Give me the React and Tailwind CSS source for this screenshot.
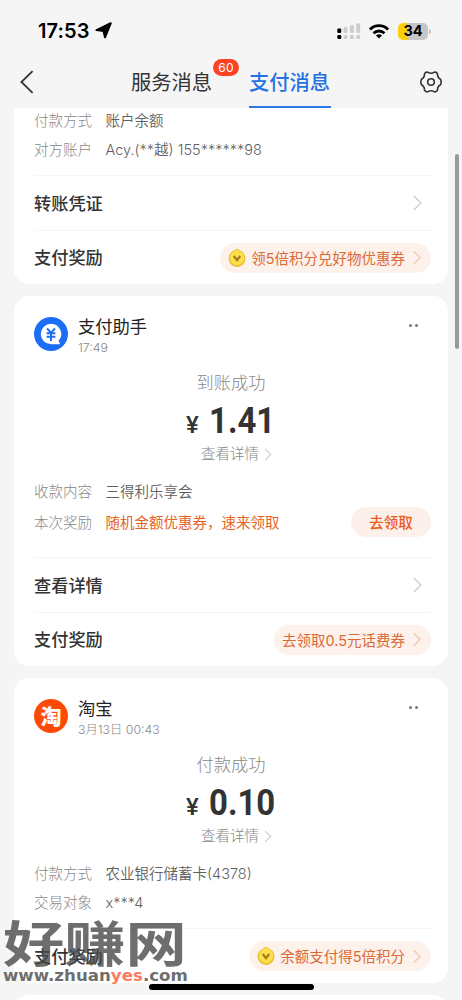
import { clsx } from 'clsx';

const ChevronRight = ({ className }) => (
  <svg viewBox="0 0 9 16" fill="none" stroke="currentColor" strokeWidth="1.3" className={className}>
    <path d="M0.8 1L8 8L0.8 15" />
  </svg>
);

const StatusBar = () => (
  <div className="h-[60px] flex items-center justify-between pl-[38px] pr-[31px] pt-[2px]">
    <div className="flex items-center gap-[5px]">
      <span className="text-[20px] leading-none font-semibold tracking-[0.1px] text-black">17:53</span>
      <svg width="17" height="17" viewBox="0 0 16 16" className="mt-[-1px]">
        <path d="M14.8 1.2L9.4 14.4L8 8.4L1.4 7.6Z" fill="#000" stroke="#000" strokeWidth="1.9" strokeLinejoin="round" />
      </svg>
    </div>
    <div className="flex items-center">
      <svg width="24" height="17" viewBox="0 0 24 17">
        <rect x="0.3" y="5.5" width="4" height="4.5" rx="1.2" fill="#000" />
        <rect x="0.3" y="12" width="4" height="4" rx="1.2" fill="#000" />
        <g fill="#cdcdcd">
          <rect x="6.6" y="4" width="3.8" height="6" rx="1.2" />
          <rect x="13" y="2" width="3.8" height="8" rx="1.2" />
          <rect x="19.3" y="0.3" width="3.8" height="9.7" rx="1.2" />
          <rect x="6.6" y="12" width="3.8" height="4" rx="1.2" />
          <rect x="13" y="12" width="3.8" height="4" rx="1.2" />
          <rect x="19.3" y="12" width="3.8" height="4" rx="1.2" />
        </g>
      </svg>
      <svg width="20" height="15" viewBox="0 0 20 15" fill="none" stroke="#000" strokeWidth="2.8" className="ml-2">
        <path d="M0.9 5.6C6 0.4 14 0.4 19.1 5.6" />
        <path d="M4.5 9.3C7.7 6.2 12.3 6.2 15.5 9.3" />
        <path d="M7 11.4C8.8 10 11.2 10 13 11.4L10 14.6Z" fill="#000" stroke="none" />
      </svg>
      <div className="ml-[9px] flex h-[17px] w-[30px] items-center justify-center rounded-[5px] bg-linear-to-r from-[#fcce0a] from-34% to-[#c6c6c6] to-34%">
        <span className="text-[14.5px] leading-none font-bold text-black">34</span>
      </div>
      <div className="ml-px h-[5px] w-[2px] rounded-r bg-[#c6c6c6]" />
    </div>
  </div>
);

const TabBar = () => (
  <div className="h-12 flex items-center pl-[20px] pr-5 text-[20.3px]">
    <svg width="14" height="24" viewBox="0 0 14 24" fill="none" stroke="#333" strokeWidth="1.8" className="mt-[-4px]">
      <path d="M12.6 1.2L1.4 12L12.6 22.8" />
    </svg>
    <div className="relative ml-[97px] h-full w-[82px] leading-[46px] whitespace-nowrap text-[#333]">
      服务消息
      <span className="absolute top-[-1px] left-[82px] h-[17px] w-[26px] rounded-full bg-[#fc4223] text-center text-[12px] leading-[17px] tracking-[0.3px] text-white">
        60
      </span>
    </div>
    <div className="ml-[36px] h-[47px] w-[82px] border-b-[2.5px] border-[#2f78e8] leading-[44px] font-medium whitespace-nowrap text-[#2672e3]">
      支付消息
    </div>
    <svg width="24" height="24" viewBox="0 0 24 24" fill="none" stroke="#333" strokeWidth="1.6" strokeLinejoin="round" className="ml-auto mt-[-4px] mr-[-1px]">
      <path d="M8.6 2.2Q12 4.4 15.4 2.2Q17.6 1.9 18.5 3.8Q18.3 7.6 21.6 9.3Q23 12 21.6 14.7Q18.3 16.4 18.5 20.2Q17.6 22.1 15.4 21.8Q12 19.6 8.6 21.8Q6.4 22.1 5.5 20.2Q5.7 16.4 2.4 14.7Q1 12 2.4 9.3Q5.7 7.6 5.5 3.8Q6.4 1.9 8.6 2.2Z" />
      <circle cx="12" cy="12" r="3.3" />
    </svg>
  </div>
);

const PayAssistantLogo = () => (
  <svg width="34" height="34" viewBox="0 0 34 34">
    <circle cx="17" cy="17" r="17" fill="#1b6df5" />
    <path d="M17 6.8A10.2 10.2 0 1 0 17 27.2H25.2Q26.4 27 25.6 25.8L24.6 23.8A10.2 10.2 0 0 0 17 6.8Z" fill="#fff" />
    <path d="M13 11.5L17 15.6L21 11.5M12.6 16.2H21.4M12.6 19.8H21.4M17 15.6V24" fill="none" stroke="#1b6df5" strokeWidth="2" />
  </svg>
);

const TaobaoLogo = () => (
  <div className="flex size-[34px] items-center justify-center rounded-full bg-[#fd4a05]">
    <span className="text-[21px] leading-none font-black text-white">淘</span>
  </div>
);

const Coin = () => (
  <svg width="18" height="20" viewBox="0 0 18 20" className="mr-[5px]">
    <path d="M9 0.8Q10.2 0.8 11.5 2.3Q17.4 4.8 17.4 10.6A8.4 8.4 0 0 1 0.6 10.6Q0.6 4.8 6.5 2.3Q7.8 0.8 9 0.8Z" fill="#e9bd2c" />
    <path d="M9 1.4Q10 1.4 11.2 3Q16.2 5 16.2 10A7.2 7.2 0 0 1 1.8 10Q1.8 5 6.8 3Q8 1.4 9 1.4Z" fill="#fbe04b" />
    <path d="M5.8 8L9 12.2L12.2 8" fill="none" stroke="#a77b1c" strokeWidth="2.2" />
  </svg>
);

const Detail = ({ label, value, first }) => (
  <div className={clsx('flex h-5 items-center pt-[2px] text-[14.5px]', !first && 'mt-[9px]')}>
    <span className="w-[71.5px] font-light text-[#888]">{label}</span>
    <span className="font-[350] text-[#606060]">{value}</span>
  </div>
);

const LinkRow = ({ title }) => (
  <div className="flex h-[54.5px] items-center justify-between border-t border-[#f5f5f5] pr-[9px]">
    <span className="pt-[2px] text-[17.2px] font-medium text-[#333]">{title}</span>
    <ChevronRight className="h-4 w-[9px] text-[#ccc]" />
  </div>
);

const RewardRow = ({ text, coin }) => (
  <div className="flex h-[54.5px] items-center justify-between border-t border-[#f5f5f5]">
    <span className="pt-[2px] text-[17.2px] font-medium text-[#333]">支付奖励</span>
    <div className="mt-px flex h-[30px] items-center rounded-full bg-[#fdf1ec] pr-[10px] pl-2 text-[14.5px] text-[#dc6a37]">
      {coin && <Coin />}
      <span className="pt-[2px]">{text}</span>
      <ChevronRight className="ml-2 h-[15px] w-[8px] text-[#f0c4ae]" />
    </div>
  </div>
);

const MessageCard = ({ logo, name, time, status, amount, children }) => (
  <section className="mt-3 rounded-[15px] bg-white pr-[17px] pl-5 pt-[19px]">
    <div className="flex h-[41px]">
      <div className="mt-[2px]">{logo}</div>
      <div className="ml-[10px] flex-1">
        <div className="h-6 text-[17.3px] leading-6 text-[#222]">{name}</div>
        <div className="mt-px h-4 text-[12.3px] leading-4 font-light text-[#888]">{time}</div>
      </div>
      <div className="mt-[9px] mr-[13px] flex gap-[3px]">
        <i className="size-[3px] rounded-full bg-[#777]" />
        <i className="size-[3px] rounded-full bg-[#777]" />
      </div>
    </div>
    <div className="mt-[15px] mr-[3px] h-6 text-center text-[17.2px] leading-6 font-light text-[#888]">{status}</div>
    <div className="mt-2 mr-[3px] flex h-9 items-baseline justify-center text-[#333]">
      <span className="w-[23px] text-[24px] leading-9 font-medium font-[Roboto]">¥</span>
      <span className="w-[67px] origin-left scale-x-[0.89] text-[37px] leading-9 font-bold font-[Roboto]">{amount}</span>
    </div>
    <div className="mt-[5px] mr-[3px] flex h-5 items-center justify-center pl-[11px] text-[14.5px] font-light text-[#888]">
      查看详情
      <ChevronRight className="ml-[5px] h-[13px] w-[8px] text-[#ccc]" />
    </div>
    <div className="mt-[17px]">{children}</div>
  </section>
);

const Watermark = () => (
  <div className="absolute top-[920px] left-[3px] w-[186px] text-[#4a4a4a] opacity-80">
    <div className="h-[49px] origin-left scale-x-[1.25] text-[49px] leading-[50px] font-bold">好赚网</div>
    <div className="h-4 origin-left scale-x-[1.04] text-[16px] leading-[14px] font-bold whitespace-nowrap font-['DejaVu_Sans']">
      www.zhuan<span className="text-[#ff5a36]">yes</span>.com
    </div>
  </div>
);

export default function App() {
  return (
    <div className="relative h-[1000px] w-[462px] overflow-hidden bg-[#f5f5f5] font-[Inter,'Noto_Sans_CJK_SC',sans-serif]">
      <StatusBar />
      <TabBar />
      <main className="pr-[14px] pl-[14px]">
        <section className="rounded-b-[15px] bg-white pr-[17px] pl-5 pt-[2px]">
          <Detail first label="付款方式" value="账户余额" />
          <Detail label="对方账户" value="Acy.(**越) 155******98" />
          <div className="h-4" />
          <LinkRow title="转账凭证" />
          <RewardRow coin text="领5倍积分兑好物优惠券" />
        </section>

        <MessageCard logo={<PayAssistantLogo />} name="支付助手" time="17:49" status="到账成功" amount="1.41">
          <Detail first label="收款内容" value="三得利乐享会" />
          <div className="mt-[6px] mb-5 flex h-[30px] items-center text-[14.5px]">
            <span className="w-[71.5px] pt-[2px] font-light text-[#888]">本次奖励</span>
            <span className="pt-[2px] text-[#e46426]">随机金额优惠券，速来领取</span>
            <button className="ml-auto h-[30px] w-[80px] rounded-full bg-[#fdefea] pt-px font-medium text-[#ec5b1c]">去领取</button>
          </div>
          <LinkRow title="查看详情" />
          <RewardRow text="去领取0.5元话费券" />
        </MessageCard>

        <MessageCard logo={<TaobaoLogo />} name="淘宝" time="3月13日 00:43" status="付款成功" amount="0.10">
          <Detail first label="付款方式" value="农业银行储蓄卡(4378)" />
          <Detail label="交易对象" value="x***4" />
          <div className="h-4" />
          <RewardRow coin text="余额支付得5倍积分" />
        </MessageCard>

        <section className="mt-3 h-10 rounded-t-[15px] bg-white" />
      </main>

      <div className="absolute top-[154px] right-[3px] h-[195px] w-[4px] rounded-full bg-[#999]" />
      <Watermark />
      <div className="absolute top-[984px] left-[149px] h-[6px] w-[165px] rounded-full bg-black" />
    </div>
  );
}
